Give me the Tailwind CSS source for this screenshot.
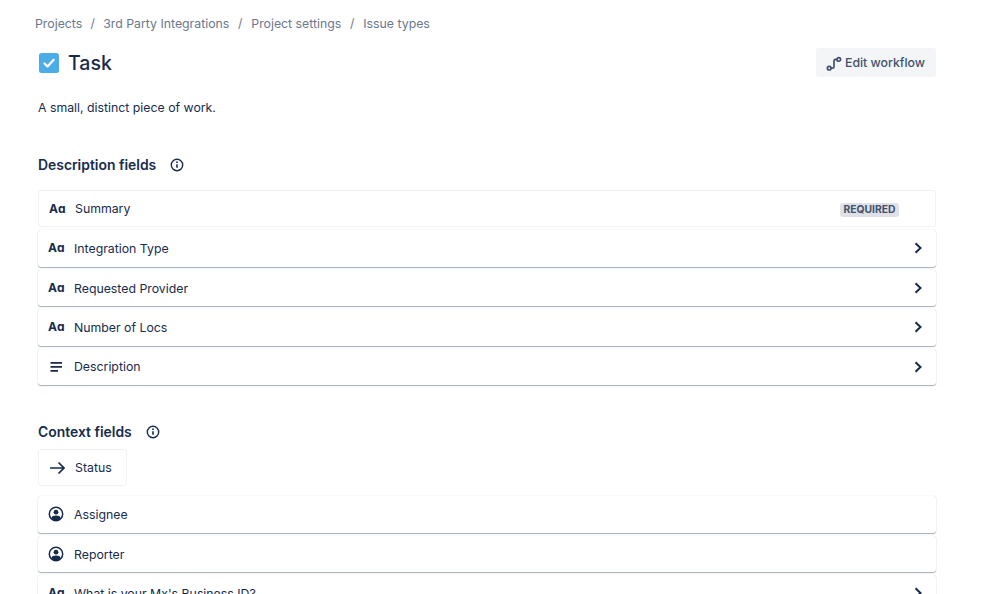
<!DOCTYPE html>
<html lang="en">
<head>
    <meta charset="UTF-8">
    <meta name="viewport" content="width=device-width, initial-scale=1.0">
    <title>Issue types</title>
    <script src="https://cdn.jsdelivr.net/npm/@tailwindcss/browser@4"></script>
</head>
<body class="h-[594px] overflow-hidden bg-white font-['Inter',sans-serif] text-[#172b4d]">
    <div class="pl-[38px] pr-[62px]">
        <nav class="flex items-center h-[46px] pt-[2px] -ml-[3px] text-[12.3px] text-[#6b778c]">
            <span>Projects</span>
            <span class="w-[21px] text-center">/</span>
            <span>3rd Party Integrations</span>
            <span class="w-[22px] text-center">/</span>
            <span>Project settings</span>
            <span class="w-[22px] text-center">/</span>
            <span>Issue types</span>
        </nav>

        <div class="flex items-center justify-between h-[33px]">
            <div class="flex items-center">
                <svg class="w-[22px] h-[22px]" viewBox="0 0 22 22">
                    <rect x="1" y="1" width="20" height="20" rx="2.5" fill="#4bade8"/>
                    <path d="M6.5 11.5l3 3 6-6.5" fill="none" stroke="#fff" stroke-width="2.4" stroke-linecap="round" stroke-linejoin="round"/>
                </svg>
                <h1 class="ml-[8px] mt-[2px] text-[19.5px] font-medium leading-none">Task</h1>
            </div>
            <button class="flex items-center h-[29px] w-[120px] pl-[10px] pt-[2px] rounded-[3px] bg-[#f4f5f7] text-[12.3px] font-medium text-[#42526e]">
                <svg class="w-[16px] h-[16px] mr-[3px]" viewBox="0 0 16 16" fill="none" stroke="currentColor" stroke-width="1.7">
                    <circle cx="3.2" cy="12.2" r="1.8"/>
                    <circle cx="12.8" cy="3.4" r="1.8"/>
                    <path d="M5 12.2h1.5c1 0 1.5-.6 1.5-1.5V5.2c0-1 .6-1.8 1.6-1.8H11"/>
                </svg>
                Edit workflow
            </button>
        </div>

        <p class="mt-[19px] text-[12.3px] leading-[20px]">A small, distinct piece of work.</p>

        <div class="flex items-center mt-[35px] h-[24px]">
            <h2 class="text-[13.9px] font-semibold">Description fields</h2>
            <svg class="w-[16px] h-[16px] ml-[13px]" viewBox="0 0 16 16" fill="none" stroke="currentColor">
                <circle cx="8" cy="8" r="5.7" stroke-width="1.4"/>
                <path d="M8 7.3v3.4" stroke-width="1.6"/>
                <circle cx="8" cy="5.2" r=".9" fill="currentColor" stroke="none"/>
            </svg>
        </div>

        <div class="flex flex-col mt-[13px] gap-[3px] text-[12.3px]">
            <div class="flex items-center h-[37px] pl-[10px] pr-[36px] rounded-[3px] border border-[#f1f2f4]">
                <span class="w-[26px] text-[12px] font-bold">Aɑ</span>
                <span class="pt-[2px]">Summary</span>
                <span class="ml-auto mt-[2px] w-[59px] h-[14px] flex items-center justify-center rounded-[3px] bg-[#dfe1e6] text-[10.3px] font-bold text-[#42526e]">REQUIRED</span>
            </div>
            <div class="flex items-center h-[36.5px] px-[10px] rounded-[3px] bg-white shadow-[0_1px_1px_#a5adba,0_0_1px_#c1c7d0]">
                <span class="w-[26px] text-[12px] font-bold">Aɑ</span>
                <span class="pt-[2px]">Integration Type</span>
                <svg class="ml-auto w-[16px] h-[16px]" viewBox="0 0 16 16" fill="none" stroke="currentColor" stroke-width="2"><path d="M5.5 3.2 10.5 8l-5 4.8"/></svg>
            </div>
            <div class="flex items-center h-[36.5px] px-[10px] rounded-[3px] bg-white shadow-[0_1px_1px_#a5adba,0_0_1px_#c1c7d0]">
                <span class="w-[26px] text-[12px] font-bold">Aɑ</span>
                <span class="pt-[2px]">Requested Provider</span>
                <svg class="ml-auto w-[16px] h-[16px]" viewBox="0 0 16 16" fill="none" stroke="currentColor" stroke-width="2"><path d="M5.5 3.2 10.5 8l-5 4.8"/></svg>
            </div>
            <div class="flex items-center h-[36.5px] px-[10px] rounded-[3px] bg-white shadow-[0_1px_1px_#a5adba,0_0_1px_#c1c7d0]">
                <span class="w-[26px] text-[12px] font-bold">Aɑ</span>
                <span class="pt-[2px]">Number of Locs</span>
                <svg class="ml-auto w-[16px] h-[16px]" viewBox="0 0 16 16" fill="none" stroke="currentColor" stroke-width="2"><path d="M5.5 3.2 10.5 8l-5 4.8"/></svg>
            </div>
            <div class="flex items-center h-[36.5px] px-[10px] rounded-[3px] bg-white shadow-[0_1px_1px_#a5adba,0_0_1px_#c1c7d0]">
                <svg class="w-[16px] h-[16px] mr-[10px]" viewBox="0 0 16 16" fill="none" stroke="currentColor" stroke-width="1.7"><path d="M2.5 3.8h11.5M2.5 7.8h11.5M2.5 11.8h7.5"/></svg>
                <span>Description</span>
                <svg class="ml-auto w-[16px] h-[16px]" viewBox="0 0 16 16" fill="none" stroke="currentColor" stroke-width="2"><path d="M5.5 3.2 10.5 8l-5 4.8"/></svg>
            </div>
        </div>

        <div class="flex items-center mt-[35px] h-[24px]">
            <h2 class="text-[13.9px] font-semibold">Context fields</h2>
            <svg class="w-[16px] h-[16px] ml-[13px]" viewBox="0 0 16 16" fill="none" stroke="currentColor">
                <circle cx="8" cy="8" r="5.7" stroke-width="1.4"/>
                <path d="M8 7.3v3.4" stroke-width="1.6"/>
                <circle cx="8" cy="5.2" r=".9" fill="currentColor" stroke="none"/>
            </svg>
        </div>

        <div class="flex items-center mt-[5px] w-[89px] h-[37px] pl-[10px] rounded-[3px] border border-[#f1f2f4] text-[12.3px]">
            <svg class="w-[16px] h-[16px] mr-[10px]" viewBox="0 0 16 16" fill="none" stroke="currentColor" stroke-width="1.7"><path d="M1 8h14M9.5 2.5 15 8l-5.5 5.5"/></svg>
            <span class="pt-[2px]">Status</span>
        </div>

        <div class="flex flex-col mt-[10px] gap-[3px] text-[12.3px]">
            <div class="flex items-center h-[36.5px] px-[10px] rounded-[3px] bg-white shadow-[0_1px_1px_#a5adba,0_0_1px_#c1c7d0]">
                <svg class="w-[16px] h-[16px] mr-[10px]" viewBox="0 0 16 16" fill="none">
                    <circle cx="8" cy="8" r="6.7" stroke="currentColor" stroke-width="1.5"/>
                    <circle cx="8" cy="6.2" r="2.4" fill="currentColor"/>
                    <path d="M3.2 12.4C3.8 10.3 5.5 9.6 8 9.6s4.2.7 4.8 2.8A6.6 6.6 0 0 1 8 14.7a6.6 6.6 0 0 1-4.8-2.3z" fill="currentColor"/>
                </svg>
                <span class="pt-[2px]">Assignee</span>
            </div>
            <div class="flex items-center h-[36.5px] px-[10px] rounded-[3px] bg-white shadow-[0_1px_1px_#a5adba,0_0_1px_#c1c7d0]">
                <svg class="w-[16px] h-[16px] mr-[10px]" viewBox="0 0 16 16" fill="none">
                    <circle cx="8" cy="8" r="6.7" stroke="currentColor" stroke-width="1.5"/>
                    <circle cx="8" cy="6.2" r="2.4" fill="currentColor"/>
                    <path d="M3.2 12.4C3.8 10.3 5.5 9.6 8 9.6s4.2.7 4.8 2.8A6.6 6.6 0 0 1 8 14.7a6.6 6.6 0 0 1-4.8-2.3z" fill="currentColor"/>
                </svg>
                <span class="pt-[2px]">Reporter</span>
            </div>
            <div class="flex items-center h-[36.5px] px-[10px] rounded-[3px] bg-white shadow-[0_1px_1px_#a5adba,0_0_1px_#c1c7d0]">
                <span class="w-[26px] text-[12px] font-bold">Aɑ</span>
                <span class="pt-[2px]">What is your Mx's Business ID?</span>
                <svg class="ml-auto w-[16px] h-[16px]" viewBox="0 0 16 16" fill="none" stroke="currentColor" stroke-width="2"><path d="M5.5 3.2 10.5 8l-5 4.8"/></svg>
            </div>
        </div>
    </div>
</body>
</html>
